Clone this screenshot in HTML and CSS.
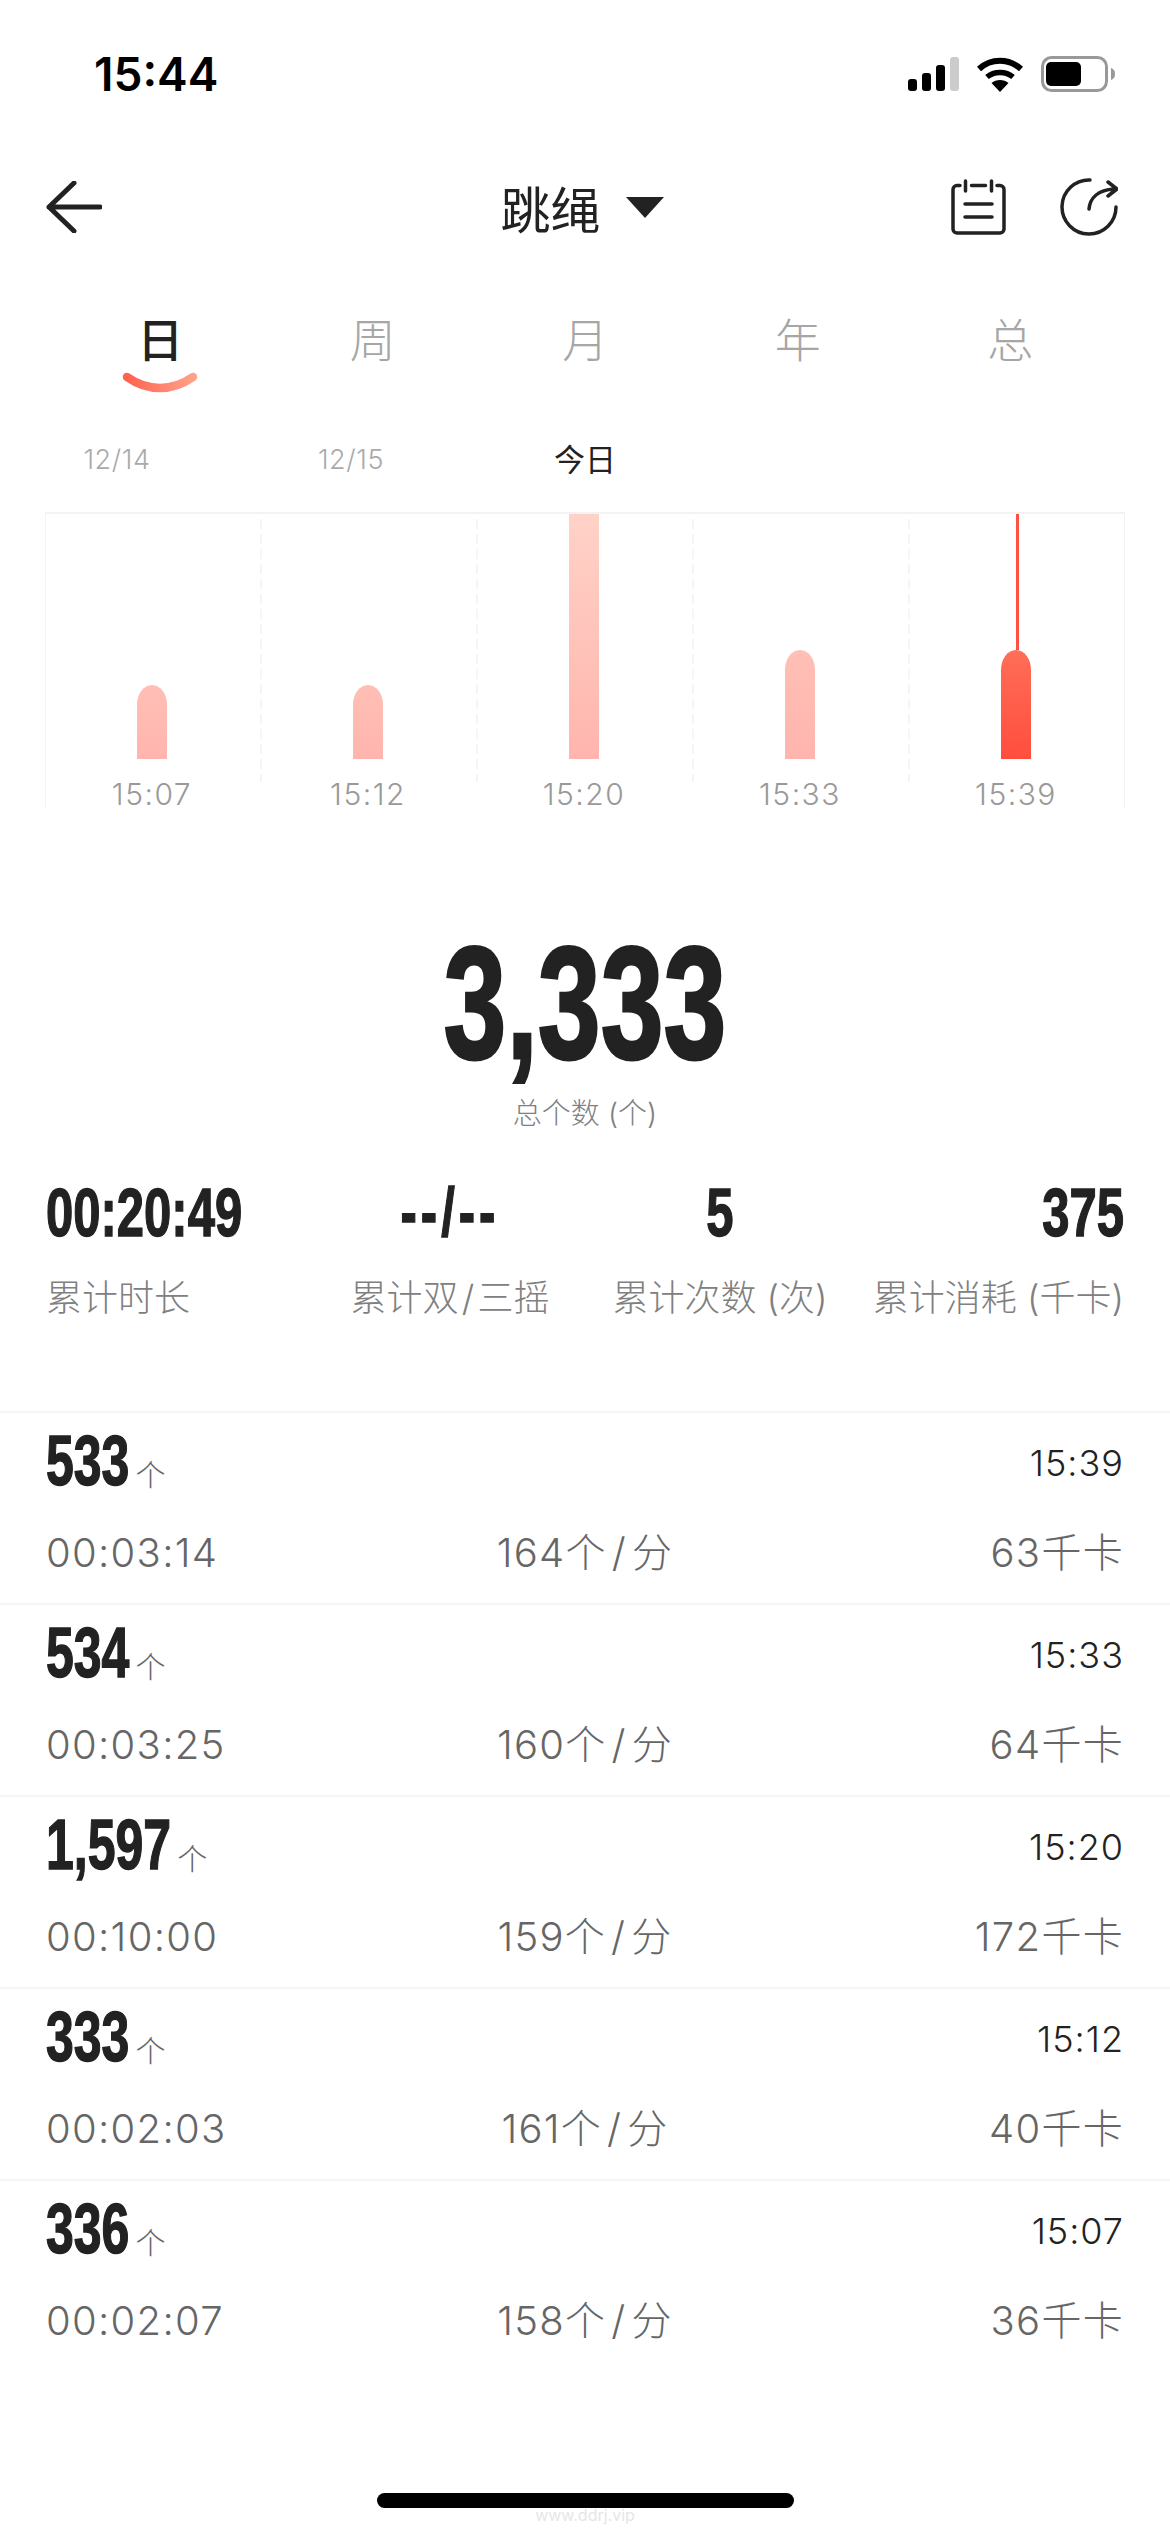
FILE: index.html
```html
<!DOCTYPE html>
<html lang="zh-CN">
<head>
    <meta charset="UTF-8">
    <meta name="viewport" content="width=device-width, initial-scale=1.0">
    <link rel="stylesheet" href="styles.css">
    <title>跳绳</title>
</head>
<body>
    <div class="page">
        <div class="status">
            <span class="clock">15:44</span>
            <div class="status-icons">
                <svg width="51" height="34" viewBox="0 0 51 34">
                    <rect x="0" y="22" width="9" height="12" rx="3"/>
                    <rect x="14" y="16" width="9" height="18" rx="3"/>
                    <rect x="28" y="8" width="9" height="26" rx="3"/>
                    <rect x="42" y="0" width="9" height="34" rx="3" fill="#ccc"/>
                </svg>
                <svg width="48" height="36" viewBox="0 0 48 36">
                    <path d="M3 13C15 2 33 2 45 13" fill="none" stroke="#000" stroke-width="6"/>
                    <path d="M11 21C18 15 30 15 37 21" fill="none" stroke="#000" stroke-width="5.5"/>
                    <path d="M24 36L15.5 27C20 23 28 23 32.5 27Z"/>
                </svg>
                <svg width="74" height="36" viewBox="0 0 74 36">
                    <rect x="1.5" y="1.5" width="64" height="33" rx="9" fill="none" stroke="#999" stroke-width="3"/>
                    <rect x="5" y="6" width="35" height="24" rx="5"/>
                    <path d="M70 12c3 1 4 3 4 6s-1 5-4 6z" fill="#999"/>
                </svg>
            </div>
        </div>

        <div class="nav">
            <svg class="back" width="56" height="52" viewBox="0 0 56 52">
                <path d="M28 2L3 26L28 50M3 26H54" fill="none" stroke="#222" stroke-width="5" stroke-linecap="round" stroke-linejoin="round"/>
            </svg>
            <div class="nav-title">
                <span>跳绳</span>
                <svg width="38" height="21" viewBox="0 0 38 21"><path d="M0 0H38L19 21Z" fill="#222"/></svg>
            </div>
            <div class="nav-actions">
                <svg width="55" height="56" viewBox="0 0 55 56">
                    <path d="M9 6.5H6a4 4 0 0 0-4 4V50a4 4 0 0 0 4 4h43a4 4 0 0 0 4-4V10.5a4 4 0 0 0-4-4h-3M14.5 2v10M40.5 2v10M20.5 6.5h14M14 25h27M14 38h27" fill="none" stroke="#222" stroke-width="3.5" stroke-linecap="round"/>
                </svg>
                <svg width="58" height="58" viewBox="0 0 58 58">
                    <path d="M30 2A27 27 0 1 0 56 29M29 31C30 20 38 12 54 11M48 4l9 7-9 7" fill="none" stroke="#222" stroke-width="3.5" stroke-linecap="round" stroke-linejoin="round"/>
                </svg>
            </div>
        </div>

        <div class="tabs">
            <div class="tab active">
                日
                <svg class="smile" width="76" height="21" viewBox="0 0 76 21">
                    <defs>
                        <linearGradient id="smileFill" gradientUnits="userSpaceOnUse" x1="0" y1="0" x2="76" y2="0">
                            <stop offset="0" stop-color="#ff5e4e"/>
                            <stop offset="1" stop-color="#ffa68c"/>
                        </linearGradient>
                    </defs>
                    <path d="M5 5C15 12 26 16 38 16C50 16 61 12 71 5" fill="none" stroke="url(#smileFill)" stroke-width="8.5" stroke-linecap="round"/>
                </svg>
            </div>
            <div class="tab">周</div>
            <div class="tab">月</div>
            <div class="tab">年</div>
            <div class="tab">总</div>
        </div>

        <div class="dates">
            <span class="date">12/14</span>
            <span class="date">12/15</span>
            <span class="date today">今日</span>
        </div>

        <div class="chart">
            <div class="col">
                <div class="plot"><div class="bar" style="height: 74px"></div></div>
                <span class="col-label">15:07</span>
            </div>
            <div class="col">
                <div class="plot"><div class="bar" style="height: 74px"></div></div>
                <span class="col-label">15:12</span>
            </div>
            <div class="col">
                <div class="plot"><div class="bar tall" style="height: 245px"></div></div>
                <span class="col-label">15:20</span>
            </div>
            <div class="col">
                <div class="plot"><div class="bar" style="height: 109px"></div></div>
                <span class="col-label">15:33</span>
            </div>
            <div class="col">
                <div class="plot">
                    <div class="cursor"></div>
                    <div class="bar current" style="height: 109px"></div>
                </div>
                <span class="col-label">15:39</span>
            </div>
        </div>

        <div class="hero">
            <div class="hero-num num">3,333</div>
            <div class="hero-label">总个数 (个)</div>
        </div>

        <div class="stats">
            <div class="stat">
                <div class="stat-num num">00:20:49</div>
                <div class="stat-label">累计时长</div>
            </div>
            <div class="stat mid">
                <div class="stat-num num dashes">--/--</div>
                <div class="stat-label">累计双&#8202;/&#8202;三摇</div>
            </div>
            <div class="stat mid">
                <div class="stat-num num">5</div>
                <div class="stat-label">累计次数 (次)</div>
            </div>
            <div class="stat end">
                <div class="stat-num num">375</div>
                <div class="stat-label">累计消耗 (千卡)</div>
            </div>
        </div>

        <div class="list">
            <div class="row">
                <div class="row-top">
                    <span class="row-num num">533</span><span class="unit">个</span>
                    <span class="row-time">15:39</span>
                </div>
                <div class="row-bottom"><span>00:03:14</span><span>164个&#8202;/&#8202;分</span><span>63千卡</span></div>
            </div>
            <div class="row">
                <div class="row-top">
                    <span class="row-num num">534</span><span class="unit">个</span>
                    <span class="row-time">15:33</span>
                </div>
                <div class="row-bottom"><span>00:03:25</span><span>160个&#8202;/&#8202;分</span><span>64千卡</span></div>
            </div>
            <div class="row">
                <div class="row-top">
                    <span class="row-num num">1,597</span><span class="unit">个</span>
                    <span class="row-time">15:20</span>
                </div>
                <div class="row-bottom"><span>00:10:00</span><span>159个&#8202;/&#8202;分</span><span>172千卡</span></div>
            </div>
            <div class="row">
                <div class="row-top">
                    <span class="row-num num">333</span><span class="unit">个</span>
                    <span class="row-time">15:12</span>
                </div>
                <div class="row-bottom"><span>00:02:03</span><span>161个&#8202;/&#8202;分</span><span>40千卡</span></div>
            </div>
            <div class="row">
                <div class="row-top">
                    <span class="row-num num">336</span><span class="unit">个</span>
                    <span class="row-time">15:07</span>
                </div>
                <div class="row-bottom"><span>00:02:07</span><span>158个&#8202;/&#8202;分</span><span>36千卡</span></div>
            </div>
        </div>

        <div class="home">
            <div class="home-bar"></div>
            <div class="watermark">www.ddrj.vip</div>
        </div>
    </div>
</body>
</html>
```
FILE: styles.css
```css
body {
    margin: 0;
    padding: 0;
    background-color: #fff;
    color: #222;
    font-family: Inter, "Noto Sans CJK SC", sans-serif;
}
.page {
    width: 1170px;
    height: 2532px;
    overflow: hidden;
}
.num {
    font-family: "Liberation Sans", sans-serif;
    font-weight: 700;
    color: #222;
    -webkit-text-stroke: 1px #222;
    transform: scaleY(1.41);
}

/* status bar */
.status {
    height: 148px;
    padding: 0 55px 0 94px;
    display: flex;
    align-items: center;
    justify-content: space-between;
}
.clock {
    font-size: 46px;
    font-weight: 600;
    color: #000;
}
.status-icons {
    display: flex;
    align-items: center;
    gap: 17px;
}

/* nav */
.nav {
    height: 114px;
    padding: 4px 52px 0 46px;
    box-sizing: border-box;
    display: grid;
    grid-template-columns: 1fr auto 1fr;
    align-items: center;
}
.nav-title {
    display: flex;
    align-items: center;
    gap: 25px;
    font-size: 50px;
    font-weight: 400;
}
.nav-actions {
    display: flex;
    align-items: center;
    justify-content: flex-end;
    gap: 54px;
}

/* tabs */
.tabs {
    height: 158px;
    padding: 49px 0 0 54px;
    box-sizing: border-box;
    display: grid;
    grid-template-columns: repeat(5, 212.5px);
}
.tab {
    font-size: 46px;
    font-weight: 300;
    line-height: 58px;
    text-align: center;
    color: #a6a6a6;
}
.tab.active {
    font-weight: 500;
    color: #222;
}
.smile {
    display: block;
    margin: 3px auto 0;
}

/* dates */
.dates {
    height: 94px;
    padding-bottom: 20px;
    box-sizing: border-box;
    display: grid;
    grid-template-columns: repeat(3, 234px);
    align-items: center;
    justify-items: center;
    align-content: center;
}
.date {
    font-size: 27px;
    font-weight: 300;
    letter-spacing: 0.6px;
    margin-top: 4px;
    color: #aaa;
}
.date.today {
    font-size: 31px;
    font-weight: 400;
    letter-spacing: 0;
    margin-top: 0;
    color: #222;
}

/* chart */
.chart {
    width: 1080px;
    height: 294px;
    margin: 0 45px;
    box-sizing: border-box;
    display: flex;
    border-left: 1px solid #f3f3f3;
    border-right: 1px solid #f3f3f3;
    box-shadow: 0 -2px 0 0 #f3f3f3;
}
.col {
    flex: none;
    width: 216px;
    padding-right: 4px;
    box-sizing: border-box;
    text-align: center;
}
.plot {
    height: 268px;
    margin-right: -4px;
    padding: 0 4px 23px 0;
    box-sizing: border-box;
    background: repeating-linear-gradient(#f5f5f5 0 10px, transparent 10px 15px) right 5px / 2px calc(100% - 5px) no-repeat;
    display: flex;
    flex-direction: column;
    align-items: center;
    justify-content: flex-end;
}
.col:last-child .plot {
    background: none;
}
.bar {
    width: 30px;
    flex-shrink: 0;
    border-radius: 15px 15px 0 0 / 20px 20px 0 0;
    background: linear-gradient(#ffbfb6, #ffb5ad);
}
.bar.tall {
    border-radius: 0;
    background: linear-gradient(#ffd2c8, #ffb5ad);
}
.bar.current {
    background: linear-gradient(#ff6e58, #ff4e3e);
}
.cursor {
    flex: 1;
    width: 3px;
    margin-left: 2px;
    background-color: #ff5040;
}
.col-label {
    font-size: 30px;
    font-weight: 300;
    line-height: 24px;
    letter-spacing: 1.5px;
    display: block;
    color: #999;
}

/* summary */
.hero {
    height: 342px;
    box-sizing: border-box;
    padding-top: 122px;
    text-align: center;
}
.hero-num {
    font-size: 113px;
    line-height: 146px;
    -webkit-text-stroke: 2px #222;
}
.hero-label {
    font-size: 29px;
    font-weight: 300;
    line-height: 40px;
    margin-top: 18px;
    color: #808080;
}
.stats {
    height: 261px;
    padding: 0 46px;
    box-sizing: border-box;
    display: grid;
    grid-template-columns: 254px 300px 240px 284px;
}
.stat {
    white-space: nowrap;
}
.stat.mid {
    text-align: center;
}
.stat.end {
    text-align: right;
}
.stat-num {
    font-size: 49px;
    line-height: 60px;
    margin-top: 32px;
}
.stat-num.dashes {
    letter-spacing: 4px;
}
.stat-label {
    font-size: 36px;
    font-weight: 300;
    line-height: 48px;
    margin-top: 32px;
    color: #808080;
}

/* list */
.row {
    height: 192px;
    padding: 0 46px;
    box-sizing: border-box;
    border-top: 2px solid #f5f5f5;
}
.row-top {
    height: 112px;
    padding-bottom: 16px;
    box-sizing: border-box;
    display: flex;
    align-items: center;
}
.row-num {
    font-size: 50px;
    line-height: 60px;
    display: inline-block;
}
.unit {
    font-size: 30px;
    font-weight: 300;
    margin: 24px 0 0 6px;
    color: #666;
}
.row-time {
    margin: 4px 0 0 auto;
    font-size: 36px;
    font-weight: 300;
    letter-spacing: 1px;
    color: #222;
}
.row-bottom {
    display: grid;
    grid-template-columns: 1fr auto 1fr;
    align-items: center;
    font-size: 40px;
    font-weight: 300;
    line-height: 56px;
    letter-spacing: 1.3px;
    color: #666;
}
.row-bottom span:last-child {
    text-align: right;
}

/* home indicator */
.home {
    margin-top: 122px;
    text-align: center;
}
.home-bar {
    width: 417px;
    height: 15px;
    margin: 0 auto;
    border-radius: 8px;
    background-color: #000;
}
.watermark {
    font-size: 16px;
    line-height: 14px;
    color: #e6e6e6;
}
```
